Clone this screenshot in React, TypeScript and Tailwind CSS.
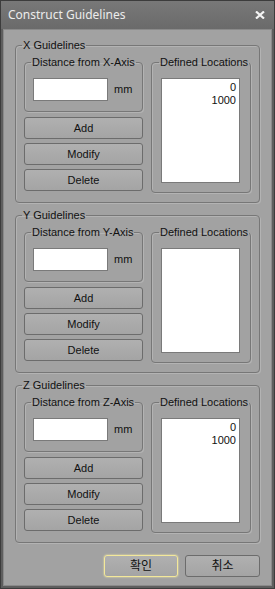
import type { ReactNode } from 'react'

const font = { fontFamily: '"Liberation Sans", "Noto Sans CJK KR", sans-serif' }

function Group({ label, className, children }: { label: string; className?: string; children: ReactNode }) {
  return (
    <fieldset
      className={`border border-[#777777] rounded-[4px] shadow-[inset_1px_1px_0_#b3b3b3,1px_1px_0_#b3b3b3] min-w-0 ${className ?? ''}`}
    >
      <legend className="-ml-[2px] px-[1px] whitespace-nowrap text-[11px] leading-[14px] text-[#111]">{label}</legend>
      {children}
    </fieldset>
  )
}

function Btn({ children, focused, big }: { children: ReactNode; focused?: boolean; big?: boolean }) {
  return (
    <button
      className={`h-[22px] w-full rounded-[3px] border text-[#111] bg-gradient-to-b from-[#b0b0b0] to-[#a4a4a4] ${
        big ? 'text-[12px]' : 'text-[11px]'
      } ${focused ? 'border-[#f3e89a] shadow-[0_0_2px_#fff3a8]' : 'border-[#6c6c6c]'}`}
    >
      {children}
    </button>
  )
}

function AxisSection({ axis, values }: { axis: string; values: string[] }) {
  return (
    <Group label={`${axis} Guidelines`} className="px-[8px] pb-[9px]">
      <div className="mt-[3px] flex gap-[8px]">
        <div className="w-[119px] flex flex-col">
          <Group label={`Distance from ${axis}-Axis`} className="px-[8px] pt-[9px] pb-[10px]">
            <div className="flex items-center gap-[6px]">
              <div className="h-[23px] w-[75px] bg-white border border-[#7a7a7a]" />
              <span className="text-[11px] text-[#111]">mm</span>
            </div>
          </Group>
          <div className="mt-[5px] flex flex-col gap-[4px]">
            <Btn>Add</Btn>
            <Btn>Modify</Btn>
            <Btn>Delete</Btn>
          </div>
        </div>
        <Group label="Defined Locations" className="flex-1 pl-[9px] pr-[10px] pt-[9px] pb-[9px]">
          <div className="h-[105px] bg-white border border-[#7a7a7a] pt-[2px] pr-[3px] text-right text-[11px] leading-[13px] text-[#111]">
            {values.map((v) => (
              <div key={v}>{v}</div>
            ))}
          </div>
        </Group>
      </div>
    </Group>
  )
}

export default function App() {
  return (
    <div style={font} className="w-[275px] h-[589px] bg-[#5e5e5e] border border-[#3c3c3c] flex flex-col overflow-hidden">
      <div className="h-[28px] shrink-0 bg-gradient-to-b from-[#787878] to-[#6a6a6a] flex items-center justify-between pl-[7px] pr-[9px]">
        <span className="text-[12px] text-[#ececec]" style={{ fontFamily: '"Noto Sans", sans-serif' }}>
          Construct Guidelines
        </span>
        <svg width="10" height="8" viewBox="0 0 10 8">
          <path d="M1 0.5 L9 7.5 M9 0.5 L1 7.5" stroke="#f4f4f4" strokeWidth="2.2" />
        </svg>
      </div>
      <div className="flex-1 mx-[2px] mb-[2px] bg-[#a2a2a2] border border-[#8a8a8a] pl-[11px] pr-[11px] pt-[8px] flex flex-col gap-[5px]">
        <AxisSection axis="X" values={['0', '1000']} />
        <AxisSection axis="Y" values={[]} />
        <AxisSection axis="Z" values={['0', '1000']} />
        <div className="mt-[5px] flex justify-end gap-[7px]">
          <div className="w-[74px]">
            <Btn focused big>확인</Btn>
          </div>
          <div className="w-[75px]">
            <Btn big>취소</Btn>
          </div>
        </div>
      </div>
    </div>
  )
}
